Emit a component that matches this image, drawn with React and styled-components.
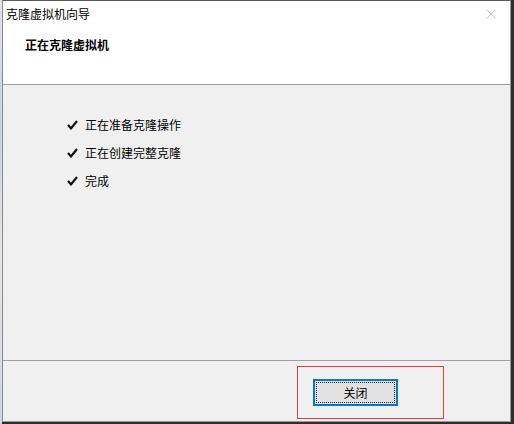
import React from "react";
import styled, { createGlobalStyle } from "styled-components";

const GlobalStyle = createGlobalStyle`
  html, body {
    margin: 0;
    padding: 0;
    background: #2e2e2e;
  }
  body {
    font-family: "Noto Sans CJK SC", "Noto Sans", sans-serif;
    font-size: 12px;
    color: #000;
  }
`;

const Screen = styled.div`
  display: flex;
  width: 514px;
  height: 424px;
  overflow: hidden;
`;

const Behind = styled.div`
  width: 2px;
  background: linear-gradient(#dfe3ea, #c9d2de 30%, #e6e6e6 60%, #cfd6e2);
`;

const Window = styled.div`
  width: 507px;
  height: 420px;
  display: flex;
  flex-direction: column;
  background: #f0f0f0;
  border-top: 1px solid #5a5a5a;
  border-left: 1px solid #8a8a8a;
  border-right: 1px solid #9a9a9a;
  border-bottom: 1px solid #9a9a9a;
`;

const TitleBar = styled.div`
  height: 26px;
  display: flex;
  align-items: center;
  justify-content: space-between;
  padding: 0 10px 0 3px;
  background: #fff;
`;

const TitleText = styled.span`
  font-size: 12px;
  line-height: 16px;
`;

const CloseIcon = styled.svg`
  width: 10px;
  height: 10px;
  margin-right: 4px;
`;

const Header = styled.div`
  height: 58px;
  background: #fff;
  border-bottom: 1px solid #a0a0a0;
  padding: 10px 0 0 22px;
  box-sizing: border-box;
`;

const HeaderTitle = styled.h1`
  margin: 0;
  font-size: 12px;
  line-height: 16px;
  font-weight: 700;
`;

const Body = styled.div`
  flex: 1;
  padding: 26px 0 0 64px;
  border-bottom: 1px solid #a0a0a0;
`;

const StepRow = styled.div`
  height: 28px;
  display: flex;
  align-items: center;
  gap: 7px;
`;

const StepText = styled.span`
  font-size: 12px;
  line-height: 16px;
`;

const Footer = styled.div`
  height: 60px;
  padding: 5px 0 0 294px;
  box-sizing: border-box;
`;

const Highlight = styled.div`
  width: 147px;
  height: 53px;
  box-sizing: border-box;
  border: 1px solid #d8434a;
  padding: 12px 0 0 15px;
`;

const Button = styled.button`
  width: 85px;
  height: 27px;
  box-sizing: border-box;
  background: #e1e1e1;
  border: 2px solid #0078d7;
  font-family: "Noto Sans CJK SC", sans-serif;
  font-size: 12px;
  color: #000;
  padding: 0;
  position: relative;
  &::after {
    content: "";
    position: absolute;
    inset: 1px;
    border: 1px dotted #222;
  }
`;

const Check = () => (
  <svg width="11" height="10" viewBox="0 0 11 10">
    <path d="M1 5 L4 8.4 L10 1" fill="none" stroke="#111" strokeWidth="2.2" />
  </svg>
);

const steps = ["正在准备克隆操作", "正在创建完整克隆", "完成"];

const App = () => {
  return (
    <>
      <GlobalStyle />
      <Screen>
        <Behind />
        <Window>
          <TitleBar>
            <TitleText>克隆虚拟机向导</TitleText>
            <CloseIcon viewBox="0 0 10 10">
              <path d="M0.5 0.5 L9.5 9.5 M9.5 0.5 L0.5 9.5" stroke="#c4c4c4" strokeWidth="1" />
            </CloseIcon>
          </TitleBar>
          <Header>
            <HeaderTitle>正在克隆虚拟机</HeaderTitle>
          </Header>
          <Body>
            {steps.map((s) => (
              <StepRow key={s}>
                <Check />
                <StepText>{s}</StepText>
              </StepRow>
            ))}
          </Body>
          <Footer>
            <Highlight>
              <Button>关闭</Button>
            </Highlight>
          </Footer>
        </Window>
      </Screen>
    </>
  );
};

export default App;
